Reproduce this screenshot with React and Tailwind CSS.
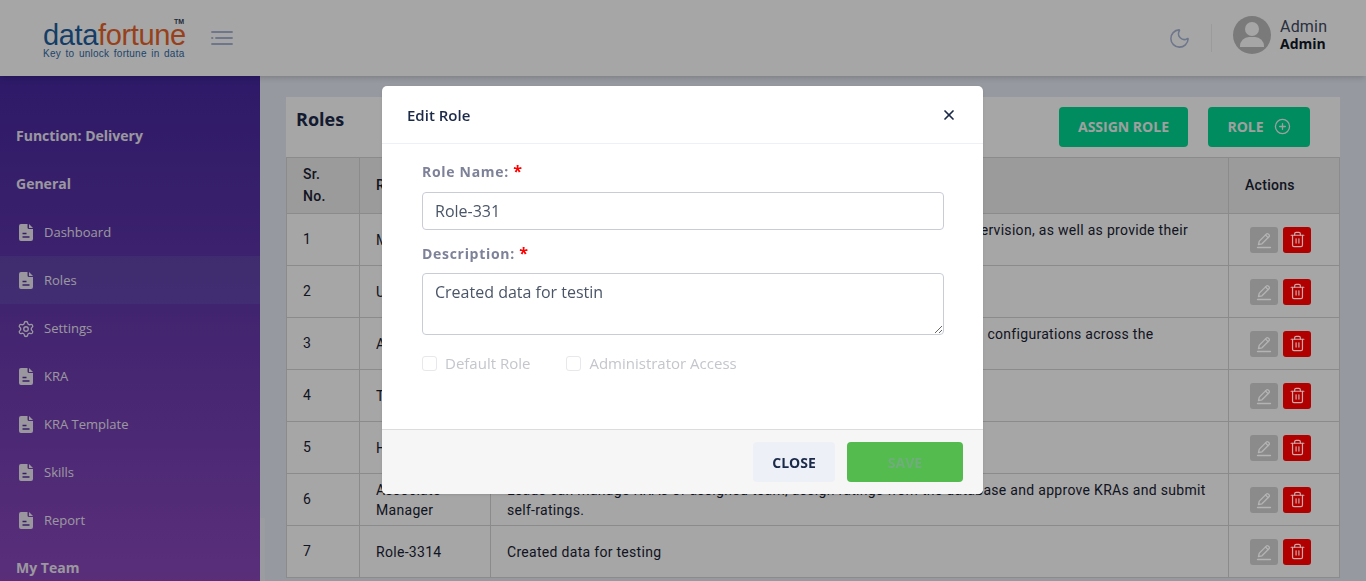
import { Trash2, CirclePlus, Moon, X, Settings } from "lucide-react";

const font = "font-['Open_Sans','Noto_Sans',sans-serif]";

const menu = [
  { label: "Dashboard" },
  { label: "Roles", active: true },
  { label: "Settings", gear: true },
  { label: "KRA" },
  { label: "KRA Template" },
  { label: "Skills" },
  { label: "Report" },
];

const rows = [
  { no: 1, name: "Manager", desc: "Managers can view and manage KRAs for team members under their supervision, as well as provide their ratings." },
  { no: 2, name: "User", desc: "Users can view their own KRAs and submit self-ratings." },
  { no: 3, name: "Admin", desc: "Administrators have full access to all modules, to manage the application configurations across the organization." },
  { no: 4, name: "Team Lead", desc: "Team leads can review the ratings of their direct reports." },
  { no: 5, name: "HR", desc: "HR can manage employee records and appraisal cycles." },
  { no: 6, name: "Associate Manager", desc: "Leads can manage KRAs of assigned team, assign ratings from the database and approve KRAs and submit self-ratings." },
  { no: 7, name: "Role-3314", desc: "Created data for testing" },
];

function DocIcon() {
  return (
    <svg viewBox="0 0 14 17" className="w-[14px] h-[17px] shrink-0" fill="#eee9f5">
      <path d="M2 0h6.5v3.5a1.5 1.5 0 0 0 1.5 1.5h4v10a2 2 0 0 1-2 2H2a2 2 0 0 1-2-2V2a2 2 0 0 1 2-2z" />
      <path d="M10 0l4 4h-4z" />
      <path d="M3.5 9.5h4M3.5 13h7" stroke="#55309a" strokeWidth="1.5" />
    </svg>
  );
}

function EditIcon() {
  return (
    <svg viewBox="0 0 18 18" className="w-[18px] h-[18px]" fill="none" stroke="#b4b4b4" strokeWidth="1.3" strokeLinejoin="round" strokeLinecap="round">
      <path d="M3.5 13.5l.8-3.4 7-7a1.4 1.4 0 0 1 2 0l.7.7a1.4 1.4 0 0 1 0 2l-7 7z" />
      <path d="M10.5 4l2.6 2.6" />
      <path d="M2.5 16.5h13" />
    </svg>
  );
}

function Logo() {
  return (
    <div className="relative w-[142px] leading-none font-['Liberation_Sans',sans-serif] mt-[3px]">
      <div className="text-[29px] tracking-[-0.35px] h-[30px] leading-[30px] whitespace-nowrap">
        <span className="text-[#1f5f9e]">data</span>
        <span className="text-[#e8642c]">fortune</span>
      </div>
      <div className="text-[10px] tracking-[0.25px] [word-spacing:1.5px] text-[#2f6ba5] -mt-[1px] whitespace-nowrap">Key to unlock fortune in data</div>
      <span className="absolute right-[1px] top-[-2px] text-[7px] font-bold text-[#333f55]">TM</span>
    </div>
  );
}

function Header() {
  return (
    <header className="relative h-[76px] bg-white flex items-center pl-[43px] pr-[40px] shrink-0 shadow-md">
      <Logo />
      <svg viewBox="0 0 22 14" className="w-[22px] h-[14px] ml-[26px]" fill="none" stroke="#a8b5d6" strokeWidth="1.8" strokeLinecap="round">
        <path d="M1 1h20M5 7h16M1 13h20" />
        <path d="M1 7h.5" />
      </svg>
      <div className="ml-auto flex items-center">
        <Moon className="w-[23px] h-[23px] text-[#a8b5d6]" strokeWidth={1.6} />
        <div className="w-px h-[28px] bg-[#eeeeee] ml-[20px] mr-[21px]" />
        <div className="flex items-center -mt-[6px]">
          <div className="w-[38px] h-[38px] rounded-full bg-[#bcbcbc] relative overflow-hidden">
            <div className="absolute left-[12px] top-[6px] w-[14px] h-[14px] rounded-full bg-white" />
            <div className="absolute left-[7px] top-[21px] w-[24px] h-[10px] rounded-t-[9px] bg-white" />
          </div>
          <div className="ml-[9px] w-[46px]">
            <div className="font-['Roboto',sans-serif] text-[16px] leading-[17px] tracking-[0.2px] text-[#3f4a63]">Admin</div>
            <div className={`font-bold text-[14px] leading-[17px] text-[#111827] ${font}`}>Admin</div>
          </div>
        </div>
      </div>
    </header>
  );
}

function Sidebar() {
  return (
    <aside className={`w-[260px] shrink-0 bg-gradient-to-b from-[#46289f] to-[#8a47bb] pt-[48px] text-[#eee9f5] ${font}`}>
      <div className="h-[24px] leading-[24px] pl-[16px] text-[14px] font-bold">Function: Delivery</div>
      <div className="h-[24px] leading-[24px] pl-[16px] text-[14px] font-bold mt-[24px]">General</div>
      <ul className="mt-[12px]">
        {menu.map((m) => (
          <li key={m.label} className={`h-[48px] flex items-center text-[13px] ${m.active ? "bg-[#6fa0c0]/15" : ""}`}>
            <span className="w-[44px] flex pl-[19px] pt-[1px]">
              {m.gear ? <Settings className="w-[18px] h-[18px] -ml-[2px] shrink-0" strokeWidth={1.8} /> : <DocIcon />}
            </span>
            <span className="pt-[2px]">{m.label}</span>
          </li>
        ))}
      </ul>
      <div className="h-[24px] leading-[24px] pl-[16px] text-[14px] font-bold mt-[12px]">My Team</div>
    </aside>
  );
}

function RolesTable() {
  return (
    <div className="bg-white mt-[21px] ml-[26px] w-[1054px]">
      <div className="h-[60px] flex items-start justify-between">
        <h1 className={`text-[18px] font-bold text-[#1c2a4a] ml-[10px] mt-[9px] ${font}`}>Roles</h1>
        <div className={`flex gap-[20px] mt-[10px] mr-[30px] text-[14px] font-bold text-[#f5f5f5] ${font}`}>
          <div className="w-[129px] h-[40px] pb-[2px] rounded-[4px] bg-[#00d891] flex items-center justify-center">ASSIGN ROLE</div>
          <div className="w-[102px] h-[40px] pb-[2px] rounded-[4px] bg-[#00d891] flex items-center justify-center gap-[10px]">
            ROLE <CirclePlus className="w-[17px] h-[17px]" strokeWidth={1.8} />
          </div>
        </div>
      </div>
      <table className="w-full border-collapse table-fixed font-['Roboto',sans-serif] text-[14px] tracking-[0.3px] text-[#1a2233]">
        <thead className="bg-[#eeeeee]">
          <tr className="h-[56px]">
            <th className="w-[73px] border border-[#d6d6d6] pl-[16px] pb-[1px] text-left font-medium leading-[22px]">Sr.<br />No.</th>
            <th className="w-[131px] border border-[#d6d6d6] pl-[16px] text-left font-medium">Role Name</th>
            <th className="border border-[#d6d6d6] pl-[16px] text-left font-medium">Description</th>
            <th className="w-[111px] border border-[#d6d6d6] pl-[16px] text-left font-medium">Actions</th>
          </tr>
        </thead>
        <tbody>
          {rows.map((r) => (
            <tr key={r.no} className="h-[52px]">
              <td className="border border-[#d6d6d6] pl-[16px]">{r.no}</td>
              <td className="border border-[#d6d6d6] pl-[16px] leading-[20px]">{r.name}</td>
              <td className="border border-[#d6d6d6] pl-[16px] pr-[16px] leading-[20px]">{r.desc}</td>
              <td className="border border-[#d6d6d6] pl-[21px]">
                <div className="flex gap-[5px]">
                  <div className="relative z-20 w-[28px] h-[26px] rounded-[3px] bg-[#8b8b8b] flex items-center justify-center">
                    <EditIcon />
                  </div>
                  <div className="relative z-20 w-[28px] h-[26px] rounded-[3px] bg-[#b00000] flex items-center justify-center">
                    <Trash2 className="w-[17px] h-[17px] text-[#d0a8a8]" strokeWidth={1.7} />
                  </div>
                </div>
              </td>
            </tr>
          ))}
        </tbody>
      </table>
    </div>
  );
}

function EditRoleModal() {
  return (
    <div className={`w-[601px] rounded-[5px] bg-white overflow-hidden shadow ${font}`}>
      <div className="h-[58px] pt-[1px] flex items-center justify-between pl-[25px] pr-[26px] border-b border-[#eef0f5]">
        <span className="text-[15px] font-semibold text-[#1c2a4a]">Edit Role</span>
        <X className="w-[16px] h-[16px] text-[#1c2a4a]" strokeWidth={2.6} />
      </div>
      <div className="h-[285px] pl-[40px] pr-[39px] pt-[18px]">
        <label className="block text-[14px] font-bold tracking-[0.7px] text-[#7e8299] h-[20px] leading-[20px]">
          Role Name: <span className="text-[16px] leading-none text-[#ff0000]">*</span>
        </label>
        <input readOnly value="Role-331" className="block w-[522px] h-[38px] mt-[10px] border border-[#c9ccd6] rounded-[4px] px-[12px] text-[16px] text-[#4a5568] outline-none" />
        <label className="block text-[14px] font-bold tracking-[0.7px] text-[#7e8299] h-[20px] leading-[20px] mt-[14px]">
          Description: <span className="text-[16px] leading-none text-[#ff0000]">*</span>
        </label>
        <textarea readOnly value="Created data for testin" className="block w-[522px] h-[62px] mt-[9px] border border-[#c9ccd6] rounded-[4px] px-[12px] py-[6px] text-[16px] text-[#4a5568] outline-none" />
        <div className="flex items-center mt-[17px] text-[15px] text-[#c4c6cc]">
          <span className="w-[15px] h-[15px] border border-[#e8e8ec] rounded-[3px]" />
          <span className="ml-[8px]">Default Role</span>
          <span className="w-[15px] h-[15px] border border-[#e8e8ec] rounded-[3px] ml-[36px]" />
          <span className="ml-[8px]">Administrator Access</span>
        </div>
      </div>
      <div className="h-[65px] bg-[#f6f6f7] border-t border-[#dcdcdc] flex items-center justify-end gap-[12px] pr-[20px]">
        <div className="w-[82px] h-[40px] rounded-[4px] bg-[#edf0f7] flex items-center justify-center text-[14px] font-bold text-[#1c2a4a]">CLOSE</div>
        <div className="w-[116px] h-[40px] rounded-[4px] bg-[#54bb4f] flex items-center justify-center text-[14px] font-bold text-[#6fae7a]">SAVE</div>
      </div>
    </div>
  );
}

export default function App() {
  return (
    <div className="h-[581px] overflow-hidden flex flex-col bg-[#e8ecf6]">
      <Header />
      <div className="flex flex-1 min-h-0">
        <Sidebar />
        <main className="flex-1 min-w-0">
          <RolesTable />
        </main>
      </div>
      {/* sidebar scroll thumb */}
      <div className="fixed left-[260px] top-[518px] bottom-0 w-[5px] bg-white/20" />
      <div className="fixed inset-0 z-10 bg-black/35" />
      <div className="fixed inset-0 z-30 flex justify-center items-start pt-[86px] pr-[1px]">
        <EditRoleModal />
      </div>
    </div>
  );
}
